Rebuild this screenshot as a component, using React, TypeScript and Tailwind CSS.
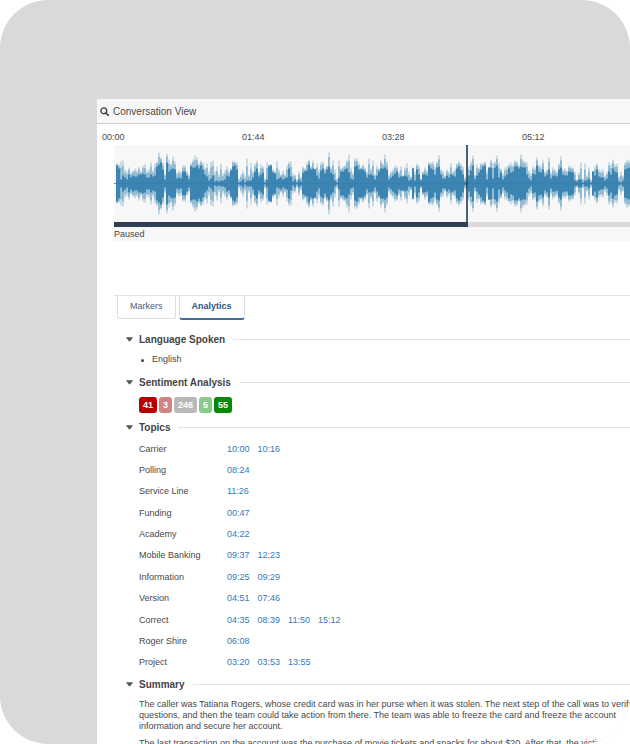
import React, { useState } from "react";

const COLORS = {
  wave: "#337ead",
  playhead: "#2f4358",
};

// Half-heights of the waveform, one sample every 2px
const PEAKS = [
  20, 19, 22, 23, 14, 12, 16, 11, 13, 15, 13, 17, 12, 18, 19, 13, 14, 21, 13, 20,
  22, 31, 26, 21, 10, 30, 24, 20, 27, 22, 11, 13, 12, 18, 18, 12, 9, 20, 24, 28,
  26, 20, 23, 21, 16, 20, 12, 22, 23, 12, 17, 9, 20, 10, 13, 17, 12, 15, 23, 22,
  21, 5, 9, 13, 8, 25, 9, 21, 12, 20, 23, 12, 19, 17, 5, 21, 19, 19, 14, 12,
  22, 14, 9, 13, 9, 18, 22, 22, 10, 9, 4, 12, 7, 17, 15, 21, 24, 17, 23, 15,
  20, 14, 21, 22, 15, 18, 31, 16, 23, 14, 5, 23, 15, 17, 18, 24, 29, 16, 11, 25,
  25, 21, 16, 19, 16, 12, 25, 15, 23, 10, 18, 15, 24, 20, 29, 22, 9, 12, 14, 18,
  17, 12, 17, 8, 16, 20, 12, 7, 16, 12, 20, 18, 5, 12, 16, 13, 21, 21, 22, 17,
  22, 28, 14, 13, 8, 14, 12, 20, 12, 15, 20, 22, 20, 17, 6, 5, 17, 22, 28, 9,
  19, 16, 21, 20, 22, 13, 16, 24, 21, 22, 28, 20, 15, 10, 16, 17, 19, 21, 19, 23,
  22, 18, 29, 24, 22, 21, 13, 10, 17, 16, 26, 19, 17, 23, 12, 14, 26, 11, 16, 14,
  12, 20, 27, 14, 15, 13, 18, 17, 16, 12, 4, 11, 21, 5, 20, 8, 16, 4, 12, 17,
  20, 14, 13, 14, 8, 12, 21, 19, 24, 19, 20, 7, 12, 8, 21, 24, 23,
];

const CORES = [
  18, 15, 4, 8, 6, 4, 9, 6, 8, 7, 7, 9, 9, 10, 9, 6, 6, 9, 7, 8,
  17, 19, 21, 14, 4, 21, 12, 14, 15, 14, 5, 6, 5, 12, 12, 8, 4, 17, 16, 16,
  18, 15, 18, 14, 9, 7, 3, 5, 8, 2, 3, 2, 3, 3, 4, 8, 7, 13, 17, 18,
  14, 1, 2, 4, 1, 3, 3, 3, 6, 12, 15, 7, 9, 11, 1, 4, 17, 18, 11, 10,
  4, 5, 6, 4, 5, 6, 15, 7, 2, 4, 1, 4, 2, 11, 12, 13, 19, 14, 15, 14,
  8, 5, 13, 15, 10, 14, 17, 11, 9, 3, 1, 6, 12, 12, 14, 15, 11, 5, 4, 17,
  18, 14, 14, 14, 12, 6, 9, 9, 8, 4, 8, 12, 15, 15, 16, 14, 4, 6, 8, 10,
  12, 6, 7, 7, 8, 7, 3, 4, 15, 3, 14, 9, 3, 9, 9, 8, 18, 15, 14, 9,
  16, 17, 9, 5, 5, 8, 6, 9, 8, 7, 15, 17, 13, 9, 2, 1, 8, 13, 18, 4,
  8, 11, 14, 17, 18, 4, 16, 16, 5, 16, 18, 6, 11, 4, 7, 9, 15, 11, 12, 17,
  17, 15, 17, 16, 16, 9, 5, 3, 10, 9, 18, 12, 11, 14, 7, 9, 14, 5, 8, 8,
  7, 14, 16, 9, 8, 8, 12, 12, 11, 3, 2, 4, 4, 1, 3, 3, 5, 1, 12, 8,
  14, 7, 6, 6, 3, 5, 12, 9, 15, 12, 11, 2, 1, 3, 14, 15, 16,
];

const TIMES = ["00:00", "01:44", "03:28", "05:12"];

const SENTIMENTS = [
  { count: 41, className: "bg-[#b80000]" },
  { count: 3, className: "bg-[#cf8585]" },
  { count: 246, className: "bg-[#b9b9b9]" },
  { count: 5, className: "bg-[#88cc88]" },
  { count: 55, className: "bg-[#058a05]" },
];

const TOPICS = [
  { name: "Carrier", times: ["10:00", "10:16"] },
  { name: "Polling", times: ["08:24"] },
  { name: "Service Line", times: ["11:26"] },
  { name: "Funding", times: ["00:47"] },
  { name: "Academy", times: ["04:22"] },
  { name: "Mobile Banking", times: ["09:37", "12:23"] },
  { name: "Information", times: ["09:25", "09:29"] },
  { name: "Version", times: ["04:51", "07:46"] },
  { name: "Correct", times: ["04:35", "08:39", "11:50", "15:12"] },
  { name: "Roger Shire", times: ["06:08"] },
  { name: "Project", times: ["03:20", "03:53", "13:55"] },
];

function Waveform() {
  return (
    <svg width="518" height="77" viewBox="0 0 518 77" className="block max-w-none">
      <rect x="0" y="38" width="518" height="1" fill={COLORS.wave} opacity="0.8" />
      {PEAKS.map((peak, i) => {
        const x = 2 + i * 2;
        const core = CORES[i];
        const mid = core + (peak - core) * 0.65;
        return (
          <g key={i} fill={COLORS.wave}>
            <rect x={x + 0.3} y={38.5 - peak} width="1.4" height={peak * 2} opacity="0.3" />
            <rect x={x + 0.1} y={38.5 - mid} width="1.6" height={mid * 2} opacity="0.45" />
            <rect x={x} y={38.5 - core} width="2" height={core * 2} opacity="0.9" />
          </g>
        );
      })}
      <rect x="352" y="0" width="2" height="77" fill={COLORS.playhead} opacity="0.85" />
    </svg>
  );
}

interface SectionProps {
  title: string;
  className: string;
  children: React.ReactNode;
}

function Section({ title, className, children }: SectionProps) {
  const [open, setOpen] = useState(true);

  return (
    <section className={className}>
      <h2 className="flex items-center gap-2">
        <button
          className="flex h-4 items-center gap-1.5 text-[10px] font-bold text-[#444]"
          aria-expanded={open}
          onClick={() => setOpen(!open)}
        >
          <svg width="7" height="5" viewBox="0 0 7 5" fill="#555">
            <path d="M0.4 0.3h6.2q0.6 0 0.2 0.5L3.9 4.2q-0.4 0.4-0.8 0L0.2 0.8q-0.4-0.5 0.2-0.5z" />
          </svg>
          {title}
        </button>
        <span className="h-px flex-1 bg-[#e3e3e3]" />
      </h2>
      {open && <div className="pl-[13px]">{children}</div>}
    </section>
  );
}

export default function App() {
  return (
    <div className="h-screen overflow-hidden rounded-[48px] bg-[#d9d9d9] pt-[99px] pl-[97px] font-['Liberation_Sans',Arial,sans-serif] text-[9px] text-[#484848]">
      <main className="h-full bg-white">
        {/* Header */}
        <header className="flex h-[25px] items-center gap-1 border-b border-[#ccc] bg-[#f7f7f7] pl-[3px]">
          <svg width="9" height="9" viewBox="0 0 9 9" fill="none" stroke="#444">
            <circle cx="3.8" cy="3.8" r="2.9" strokeWidth="1.4" />
            <path d="M6 6l2.3 2.3" strokeWidth="1.7" strokeLinecap="round" />
          </svg>
          <h1 className="text-[10px]">Conversation View</h1>
        </header>

        {/* Player */}
        <div className="flex h-[21px] items-end pl-[5px] leading-4">
          {TIMES.map((time) => (
            <span key={time} className="w-[140px] shrink-0">
              {time}
            </span>
          ))}
        </div>
        <div className="ml-[17px] overflow-hidden bg-[#f7f7f7]">
          <Waveform />
          <div className="flex h-[5px] bg-[#dcdcdc]">
            <div className="w-[354px] bg-[#2f4055]" />
          </div>
          <p className="h-[14px] leading-[14px]">Paused</p>
        </div>

        {/* Tabs */}
        <div className="mt-[54px] ml-[17px] flex items-start gap-[3px] border-t border-[#e3e3e3] pl-[3px]" role="tablist">
          <button
            role="tab"
            aria-selected="false"
            className="h-[23px] rounded-b-[3px] border border-t-0 border-[#ddd] px-3 text-[#45607c]"
          >
            Markers
          </button>
          <button
            role="tab"
            aria-selected="true"
            className="h-6 rounded-b-[3px] border border-t-0 border-b-2 border-[#ddd] border-b-[#436d99] px-3 font-bold text-[#2f5580]"
          >
            Analytics
          </button>
        </div>

        {/* Analytics */}
        <div className="pl-[29px]">
          <Section title="Language Spoken" className="mt-[11px]">
            <ul className="mt-[5px]">
              <li className="flex h-4 items-center gap-2 pl-0.5">
                <span className="size-[3px] rounded-full bg-[#444]" />
                English
              </li>
            </ul>
          </Section>

          <Section title="Sentiment Analysis" className="mt-1.5">
            <div className="mt-[7px] flex gap-0.5">
              {SENTIMENTS.map((s) => (
                <span
                  key={s.count}
                  className={`h-4 rounded-[3px] px-1 leading-4 font-bold text-white ${s.className}`}
                >
                  {s.count}
                </span>
              ))}
            </div>
          </Section>

          <Section title="Topics" className="mt-1.5">
            <table className="mt-[3px] h-[235px] leading-4">
              <tbody>
                {TOPICS.map((topic) => (
                  <tr key={topic.name}>
                    <th scope="row" className="w-[88px] p-0 text-left font-normal">
                      {topic.name}
                    </th>
                    <td className="p-0">
                      <div className="flex gap-2">
                        {topic.times.map((time) => (
                          <a key={time} href="#" className="text-[#337ab7]">
                            {time}
                          </a>
                        ))}
                      </div>
                    </td>
                  </tr>
                ))}
              </tbody>
            </table>
          </Section>

          <Section title="Summary" className="mt-[3px]">
            <div className="mt-[7px] space-y-1.5 leading-[11px] whitespace-nowrap">
              <p>
                The caller was Tatiana Rogers, whose credit card was in her purse when it was stolen. The next step of the call was to verify
                <br />
                questions, and then the team could take action from there. The team was able to freeze the card and freeze the account
                <br />
                information and secure her account.
              </p>
              <p>The last transaction on the account was the purchase of movie tickets and snacks for about $20. After that, the victim</p>
            </div>
          </Section>
        </div>
      </main>
    </div>
  );
}
